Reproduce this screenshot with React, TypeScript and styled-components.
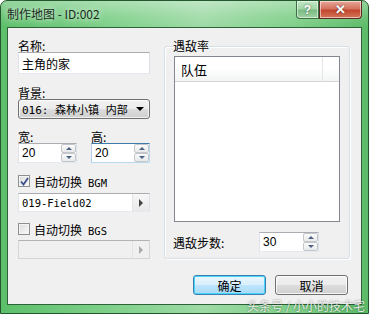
import React from "react";
import styled, { createGlobalStyle } from "styled-components";

const Global = createGlobalStyle`
  html, body { margin: 0; padding: 0; background: #ffffff; }
  body { font-family: "Noto Sans CJK SC", "Noto Sans", sans-serif; font-size: 12px; color: #000; }
  * { box-sizing: border-box; }
`;

const CJK = `"Noto Sans CJK SC", "Noto Sans", sans-serif`;
const MONO = `"DejaVu Sans Mono", "Noto Sans CJK SC", monospace`;

const Window = styled.div`
  position: relative;
  width: 369px;
  height: 314px;
  display: flex;
  flex-direction: column;
  border: 1px solid #24572e;
  border-radius: 7px 7px 0 0;
  overflow: hidden;
  background: linear-gradient(90deg, #5cbf6a 0%, #7fd08a 30%, #9edaa6 55%, #7fcf89 80%, #5cbb68 100%);
`;

const TitleBar = styled.div`
  height: 26px;
  display: flex;
  align-items: flex-start;
  justify-content: space-between;
  padding-left: 6px;
  padding-right: 6px;
  background: linear-gradient(180deg, rgba(255,255,255,0.35) 0%, rgba(255,255,255,0.1) 60%, rgba(0,0,0,0) 100%);
`;

const Title = styled.div`
  margin-top: 5px;
  font-family: ${CJK};
  font-size: 12px;
  line-height: 16px;
  color: #1d2b1f;
  text-shadow: 0 0 6px rgba(255,255,255,0.9);
`;

const Caption = styled.div`
  display: flex;
`;

const CapBtn = styled.div<{ $close?: boolean }>`
  width: ${p => (p.$close ? 43 : 23)}px;
  height: 18px;
  display: flex;
  align-items: center;
  justify-content: center;
  border: 1px solid ${p => (p.$close ? "#5b2a22" : "#3c6e46")};
  border-top: none;
  border-radius: ${p => (p.$close ? "0 0 4px 0" : "0 0 0 4px")};
  background: ${p =>
    p.$close
      ? "linear-gradient(180deg, #e8a899 0%, #d4725f 45%, #c2462f 55%, #d47658 100%)"
      : "linear-gradient(180deg, #c3e7c6 0%, #a2d6a6 45%, #7dbd83 55%, #9fd2a3 100%)"};
  box-shadow: inset 0 0 0 1px rgba(255,255,255,0.55);
  color: #fff;
  font-family: "Liberation Sans", sans-serif;
  font-weight: bold;
  font-size: ${p => (p.$close ? 13 : 12)}px;
  text-shadow: 0 0 2px rgba(0,0,0,0.6);
`;

const Frame = styled.div`
  flex: 1;
  padding: 0 6px 8px 6px;
  display: flex;
`;

const Client = styled.div`
  flex: 1;
  background: #f0f0f0;
  border: 1px solid #2e6238;
  display: flex;
  flex-direction: column;
  padding: 11px 11px 0 10px;
`;

const Columns = styled.div`
  display: flex;
  gap: 14px;
  align-items: flex-start;
`;

const LeftCol = styled.div`
  width: 132px;
  display: flex;
  flex-direction: column;
`;

const Label = styled.div<{ $mt?: number; $w?: number }>`
  height: 13px;
  line-height: 13px;
  font-family: ${CJK};
  font-size: 12px;
  margin-top: ${p => p.$mt ?? 0}px;
  width: ${p => (p.$w ? `${p.$w}px` : "auto")};
`;

const TextBox = styled.div<{ $h?: number; $mt?: number; $mono?: boolean }>`
  height: ${p => p.$h ?? 21}px;
  margin-top: ${p => p.$mt ?? 0}px;
  background: #fff;
  border: 1px solid;
  border-color: #abadb3 #dbdfe6 #e3e9ef #e2e3ea;
  padding-left: 3px;
  display: flex;
  align-items: center;
  font-family: ${p => (p.$mono ? MONO : CJK)};
  font-size: ${p => (p.$mono ? 10.5 : 12)}px;
`;

const Combo = styled.div`
  height: 20px;
  border: 1px solid #707070;
  border-radius: 3px;
  background: linear-gradient(180deg, #f2f2f2 0%, #ebebeb 50%, #dddddd 51%, #cfcfcf 100%);
  box-shadow: inset 0 0 0 1px rgba(255,255,255,0.7);
  display: flex;
  align-items: center;
  justify-content: space-between;
  padding: 0 5px 0 3px;
  font-family: ${MONO};
  font-size: 11px;
`;

const Arrow = styled.div`
  width: 0;
  height: 0;
  border-left: 4px solid transparent;
  border-right: 4px solid transparent;
  border-top: 4px solid #000;
`;

const SpinRow = styled.div`
  display: flex;
  justify-content: space-between;
`;

const SpinCol = styled.div`
  display: flex;
  flex-direction: column;
`;

const Spin = styled.div<{ $w: number; $focus?: boolean }>`
  width: ${p => p.$w}px;
  height: 20px;
  background: #fff;
  border: 1px solid;
  border-color: ${p => (p.$focus ? "#3d7bad #b7d9ed #b7d9ed #b5cfe7" : "#abadb3 #dbdfe6 #e3e9ef #e2e3ea")};
  display: flex;
  align-items: center;
  padding-left: 3px;
  font-family: "Liberation Sans", sans-serif;
  font-size: 12px;
`;

const SpinValue = styled.div`
  flex: 1;
`;

const SpinBtns = styled.div`
  width: 15px;
  height: 18px;
  display: flex;
  flex-direction: column;
`;

const SpinBtn = styled.div<{ $down?: boolean }>`
  flex: 1;
  border: 1px solid #c3c6cb;
  border-radius: 2px;
  background: linear-gradient(180deg, #fbfbfb 0%, #e8e9ea 100%);
  display: flex;
  align-items: center;
  justify-content: center;
  &::after {
    content: "";
    width: 0;
    height: 0;
    border-left: 3px solid transparent;
    border-right: 3px solid transparent;
    ${p => (p.$down ? "border-top: 3px solid #4d6185;" : "border-bottom: 3px solid #4d6185;")}
  }
`;

const CheckRow = styled.div<{ $mt: number }>`
  margin-top: ${p => p.$mt}px;
  height: 14px;
  display: flex;
  align-items: center;
  gap: 4px;
  font-family: ${CJK};
  font-size: 12px;
`;

const Box = styled.div`
  width: 12px;
  height: 12px;
  border: 1px solid #8e8f8f;
  background: linear-gradient(135deg, #dcdcdc 0%, #fbfbfb 100%);
  box-shadow: inset 0 0 0 1px #f4f4f4;
  display: flex;
  align-items: center;
  justify-content: center;
`;

const MonoText = styled.span`
  font-family: ${MONO};
  font-size: 10.5px;
  margin-left: 6px;
`;

const FileBox = styled.div<{ $mt: number; $h: number }>`
  margin-top: ${p => p.$mt}px;
  height: ${p => p.$h}px;
  background: #fff;
  border: 1px solid;
  border-color: #abadb3 #dbdfe6 #e3e9ef #e2e3ea;
  display: flex;
  font-family: ${MONO};
  font-size: 10.5px;
`;

const FileBoxDisabled = styled(FileBox)`
  background: #f0f0f0;
  border-color: #b5b2b5 #d5d5d5 #d5d5d5 #d5d5d5;
`;

const FileText = styled.div`
  flex: 1;
  display: flex;
  align-items: center;
  padding-left: 3px;
`;

const Browse = styled.div<{ $disabled?: boolean }>`
  width: 17px;
  display: flex;
  align-items: center;
  justify-content: center;
  border-left: 1px solid #e4e4e4;
  background: ${p => (p.$disabled ? "#f0f0f0" : "linear-gradient(180deg, #f7f7f7 0%, #e9e9e9 100%)")};
  &::after {
    content: "";
    width: 0;
    height: 0;
    border-top: 4px solid transparent;
    border-bottom: 4px solid transparent;
    border-left: 4px solid ${p => (p.$disabled ? "#a8a8a8" : "#444")};
  }
`;

const Group = styled.fieldset`
  width: 186px;
  height: 220px;
  margin: 0;
  padding: 3px 9px 0 8px;
  border: 1px solid #d5dfe5;
  border-radius: 3px;
  box-shadow: 1px 1px 0 #fff, inset 1px 1px 0 #fff;
  display: flex;
  flex-direction: column;
`;

const Legend = styled.legend`
  padding: 0;
  margin-left: 0;
  font-family: ${CJK};
  font-size: 12px;
  line-height: 14px;
`;

const ListBox = styled.div`
  height: 166px;
  margin-left: 1px;
  background: #fff;
  border: 1px solid #828790;
  display: flex;
  flex-direction: column;
`;

const Header = styled.div`
  height: 25px;
  display: flex;
  background: linear-gradient(180deg, #ffffff 0%, #ffffff 45%, #f3f4f5 100%);
  border-bottom: 1px solid #d5d5d5;
`;

const HeaderCell = styled.div<{ $w?: number }>`
  width: ${p => (p.$w ? `${p.$w}px` : "auto")};
  flex: ${p => (p.$w ? "none" : 1)};
  display: flex;
  align-items: center;
  padding-left: 6px;
  border-right: ${p => (p.$w ? "1px solid #e3e5e8" : "none")};
  font-family: ${CJK};
  font-size: 13px;
`;

const StepRow = styled.div`
  margin-top: 10px;
  display: flex;
  align-items: center;
  justify-content: space-between;
  padding-right: 21px;
`;

const ButtonRow = styled.div`
  margin-top: 16px;
  display: flex;
  justify-content: flex-end;
  gap: 9px;
  padding-right: 2px;
`;

const Button = styled.div<{ $default?: boolean }>`
  width: 73px;
  height: 20px;
  border: 1px solid ${p => (p.$default ? "#3c7fb1" : "#707070")};
  border-radius: 3px;
  background: ${p =>
    p.$default
      ? "linear-gradient(180deg, #eaf6fd 0%, #d9f0fc 50%, #bee6fd 51%, #a7d9f5 100%)"
      : "linear-gradient(180deg, #f2f2f2 0%, #ebebeb 50%, #dddddd 51%, #cfcfcf 100%)"};
  box-shadow: inset 0 0 0 1px ${p => (p.$default ? "#48d5fa" : "rgba(255,255,255,0.8)")};
  display: flex;
  align-items: center;
  justify-content: center;
  font-family: ${CJK};
  font-size: 12px;
`;

const Watermark = styled.div`
  position: absolute;
  left: 246px;
  top: 298px;
  white-space: nowrap;
  font-family: ${CJK};
  font-size: 12px;
  line-height: 14px;
  color: rgba(255,255,255,0.85);
  text-shadow: 0 0 2px rgba(0,0,0,0.55);
`;

function Check() {
  return (
    <svg width="9" height="9" viewBox="0 0 9 9">
      <path d="M1 4.5 L3.5 7.5 L8 1" fill="none" stroke="#3a4f8c" strokeWidth="1.8" />
    </svg>
  );
}

function SpinBox({ w, value, focus }: { w: number; value: string; focus?: boolean }) {
  return (
    <Spin $w={w} $focus={focus}>
      <SpinValue>{value}</SpinValue>
      <SpinBtns>
        <SpinBtn />
        <SpinBtn $down />
      </SpinBtns>
    </Spin>
  );
}

export default function App() {
  return (
    <>
      <Global />
      <Window>
        <TitleBar>
          <Title>制作地图 - ID:002</Title>
          <Caption>
            <CapBtn>?</CapBtn>
            <CapBtn $close>✕</CapBtn>
          </Caption>
        </TitleBar>
        <Frame>
          <Client>
            <Columns>
              <LeftCol>
                <Label>名称:</Label>
                <TextBox $h={22}>主角的家</TextBox>
                <Label $mt={12}>背景:</Label>
                <Combo>
                  <span>016: 森林小镇 内部</span>
                  <Arrow />
                </Combo>
                <SpinRow>
                  <SpinCol>
                    <Label $mt={11}>宽:</Label>
                    <SpinBox w={59} value="20" />
                  </SpinCol>
                  <SpinCol>
                    <Label $mt={11}>高:</Label>
                    <SpinBox w={59} value="20" focus />
                  </SpinCol>
                </SpinRow>
                <CheckRow $mt={11}>
                  <Box>
                    <Check />
                  </Box>
                  <span>
                    自动切换<MonoText>BGM</MonoText>
                  </span>
                </CheckRow>
                <FileBox $mt={5} $h={19}>
                  <FileText>019-Field02</FileText>
                  <Browse />
                </FileBox>
                <CheckRow $mt={10}>
                  <Box />
                  <span>
                    自动切换<MonoText>BGS</MonoText>
                  </span>
                </CheckRow>
                <FileBoxDisabled $mt={4} $h={19}>
                  <FileText />
                  <Browse $disabled />
                </FileBoxDisabled>
              </LeftCol>
              <Group>
                <Legend>遇敌率</Legend>
                <ListBox>
                  <Header>
                    <HeaderCell $w={148}>队伍</HeaderCell>
                    <HeaderCell />
                  </Header>
                </ListBox>
                <StepRow>
                  <Label>遇敌步数:</Label>
                  <SpinBox w={60} value="30" />
                </StepRow>
              </Group>
            </Columns>
            <ButtonRow>
              <Button $default>确定</Button>
              <Button>取消</Button>
            </ButtonRow>
          </Client>
        </Frame>
        <Watermark>头条号 / 小小的技术宅</Watermark>
      </Window>
    </>
  );
}
